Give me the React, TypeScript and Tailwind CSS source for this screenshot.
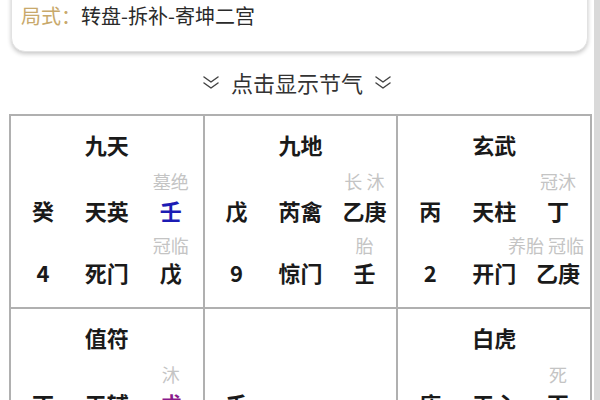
type Cell = {
  title: string;
  top: string;
  main: [string, string, string];
  mainColor?: string;
  mid: string;
  midClass?: string;
  bottom: [string, string, string];
};

const cells: Cell[] = [
  { title: "九天", top: "墓绝", main: ["癸", "天英", "壬"], mainColor: "text-[#1c1cb4]", mid: "冠临", bottom: ["4", "死门", "戊"] },
  { title: "九地", top: "长 沐", main: ["戊", "芮禽", "乙庚"], mid: "胎", bottom: ["9", "惊门", "壬"] },
  { title: "玄武", top: "冠沐", main: ["丙", "天柱", "丁"], mid: "养胎 冠临", midClass: "mr-6", bottom: ["2", "开门", "乙庚"] },
  { title: "值符", top: "沐", main: ["丁", "天辅", "戊"], mainColor: "text-[#8a1a8c]", mid: "", bottom: ["7", "伤门", "丙"] },
  { title: "", top: "", main: ["壬", "", ""], mid: "", bottom: ["", "", ""] },
  { title: "白虎", top: "死", main: ["庚", "天心", "丙"], mid: "", bottom: ["6", "杜门", "辛"] },
];

function DoubleChevron() {
  return (
    <svg width="18" height="15" viewBox="0 0 18 15" fill="none" stroke="#444" strokeWidth="1.5" strokeLinecap="round" strokeLinejoin="round">
      <path d="M2 2 9 7 16 2" />
      <path d="M2 8 9 13 16 8" />
    </svg>
  );
}

function Palace({ cell }: { cell: Cell }) {
  return (
    <div className="h-[193px] border-r-2 border-b-2 border-[#b0b0b0] pt-[16px]">
      <div className="flex h-6 items-center justify-center text-[22px] font-bold text-[#1a1a1a]">{cell.title}</div>
      <div className="mt-3 grid h-5 grid-cols-3 text-[18px] text-[#c4c4c4]">
        <span />
        <span />
        <span className="flex items-center justify-center whitespace-nowrap">{cell.top}</span>
      </div>
      <div className="mt-[6px] grid h-[22px] grid-cols-3 text-[22px] font-bold text-[#1a1a1a]">
        <span className="flex items-center justify-center">{cell.main[0]}</span>
        <span className="flex items-center justify-center">{cell.main[1]}</span>
        <span className={`flex items-center justify-center ${cell.mainColor ?? ""}`}>{cell.main[2]}</span>
      </div>
      <div className="mt-[16px] grid h-5 grid-cols-3 text-[18px] text-[#c4c4c4]">
        <span />
        <span />
        <span className="flex items-center justify-center whitespace-nowrap">
          <span className={cell.midClass}>{cell.mid}</span>
        </span>
      </div>
      <div className="mt-[4px] grid h-[22px] grid-cols-3 text-[22px] font-bold text-[#1a1a1a]">
        {cell.bottom.map((t, i) => (
          <span key={i} className="flex items-center justify-center">{t}</span>
        ))}
      </div>
    </div>
  );
}

export default function App() {
  return (
    <div
      className="flex h-[400px] w-[600px] overflow-hidden bg-white"
      style={{ fontFamily: '"Noto Sans CJK SC", "Noto Sans", sans-serif' }}
    >
      <div className="flex-1">
        <div className="mt-[-30px] ml-[11px] mr-[6px] rounded-[14px] border border-[#e2e2e2] bg-white px-[9px] pt-[32px] pb-[22px] shadow-[0_2px_4px_rgba(0,0,0,0.22)]">
          <p className="h-[26px] text-[20px] leading-[26px]">
            <span className="text-[#c8a96b]">局式：</span>
            <span className="text-[#2a2a2a]">转盘-拆补-寄坤二宫</span>
          </p>
        </div>

        <div className="mt-[15px] flex h-[30px] items-center justify-center gap-[11px] text-[#333]">
          <DoubleChevron />
          <span className="text-[22px] leading-[30px]">点击显示节气</span>
          <DoubleChevron />
        </div>

        <div className="mt-[17px] ml-[9px] mr-[2px] grid grid-cols-3 border-t-2 border-l-2 border-[#b0b0b0]">
          {cells.map((c, i) => (
            <Palace key={i} cell={c} />
          ))}
        </div>
      </div>
      <div className="w-[6px] bg-[#d9d9d9]" />
    </div>
  );
}
